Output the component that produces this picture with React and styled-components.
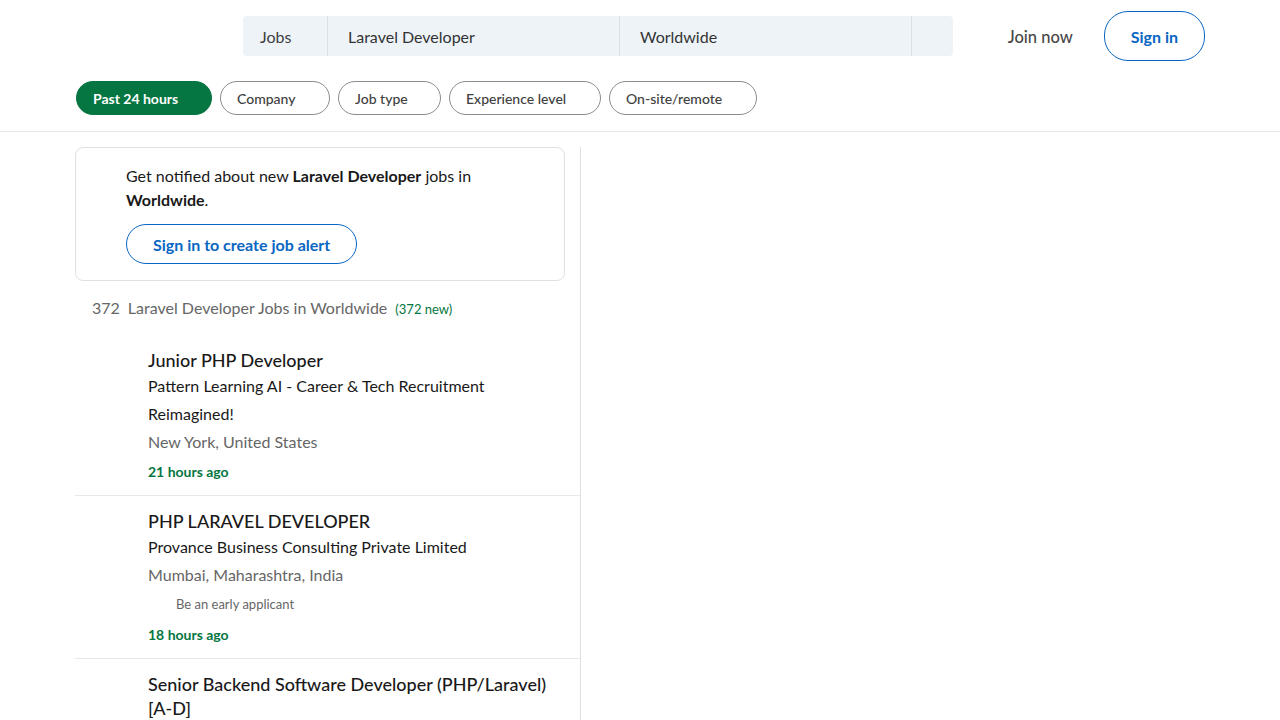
import styled, { createGlobalStyle } from "styled-components";

const GlobalStyle = createGlobalStyle`
  body {
    margin: 0;
    background: #fff;
    font-family: Lato, "Open Sans", sans-serif;
    color: rgba(0, 0, 0, 0.9);
  }
`;

const Header = styled.header`
  border-bottom: 1px solid #e8e8e8;
`;

const TopBar = styled.div`
  display: flex;
  align-items: center;
  height: 72px;
  padding: 0 75px 0 243px;
`;

const SearchBar = styled.div`
  display: flex;
  width: 710px;
  height: 40px;
  background: #eef3f8;
  border-radius: 4px;
`;

const SearchCell = styled.div`
  display: flex;
  align-items: center;
  width: ${(p) => p.$w}px;
  padding-left: ${(p) => p.$pad}px;
  box-sizing: border-box;
  border-right: ${(p) => (p.$last ? "none" : "1px solid #dce0e3")};
  font-size: 16px;
  color: ${(p) => (p.$label ? "#404040" : "#333")};
`;

const Actions = styled.div`
  display: flex;
  align-items: center;
  margin-left: auto;
  gap: 31px;
`;

const JoinLink = styled.a`
  font-size: 16.5px;
  line-height: 24px;
  padding-top: 2px;
  color: #474747;
  font-weight: 500;
`;

const OutlineButton = styled.button`
  font-family: inherit;
  background: #fff;
  border: 1px solid #0a66c2;
  color: #0a66c2;
  font-size: 16px;
  font-weight: 700;
  height: ${(p) => p.$h}px;
  padding: 0 ${(p) => p.$px}px;
  border-radius: 24px;
`;

const Filters = styled.div`
  display: flex;
  gap: 8px;
  padding: 9px 76px 16px;
`;

const Pill = styled.button`
  font-family: inherit;
  height: 34px;
  width: ${(p) => p.$w}px;
  box-sizing: border-box;
  padding: 0 16px;
  text-align: left;
  border-radius: 17px;
  font-size: 14px;
  font-weight: ${(p) => (p.$active ? 700 : 500)};
  background: ${(p) => (p.$active ? "#057642" : "#fff")};
  color: ${(p) => (p.$active ? "#fff" : "#404040")};
  border: 1px solid ${(p) => (p.$active ? "#057642" : "#8c8c8c")};
`;

const Main = styled.main`
  display: flex;
  padding: 15px 0 0 75px;
`;

const LeftColumn = styled.section`
  width: 505px;
  border-right: 1px solid #e0e0e0;
`;

const AlertCard = styled.div`
  width: 490px;
  box-sizing: border-box;
  border: 1px solid #e0e0e0;
  border-radius: 8px;
  padding: 16px 24px 16px 50px;
`;

const AlertText = styled.p`
  margin: 0 0 12px;
  font-size: 16px;
  line-height: 24px;
  color: #191919;
  b {
    font-weight: 700;
  }
`;

const ResultCount = styled.div`
  display: flex;
  align-items: baseline;
  gap: 8px;
  padding: 17px 0 0 17px;
  height: 37px;
  font-size: 16px;
  color: #666;
`;

const NewCount = styled.span`
  font-size: 13px;
  color: #057642;
`;

const JobList = styled.ul`
  list-style: none;
  margin: 0;
  padding: 0;
`;

const JobItem = styled.li`
  padding: 13px 24px 10px 73px;
  border-bottom: 1px solid #e8e8e8;
`;

const JobTitle = styled.h3`
  margin: 0;
  font-size: 18px;
  font-weight: 500;
  line-height: 24px;
  color: #191919;
`;

const Company = styled.h4`
  margin: 0;
  font-size: 16px;
  font-weight: 400;
  line-height: 28px;
  color: #191919;
`;

const Location = styled.div`
  font-size: 16px;
  line-height: 28px;
  color: #666;
`;

const Insight = styled.div`
  padding-left: 28px;
  font-size: 13px;
  line-height: 30px;
  color: #666;
`;

const Posted = styled.time`
  display: block;
  margin-top: 3px;
  font-size: 14px;
  font-weight: 700;
  line-height: 26px;
  color: #057642;
`;

const jobs = [
  {
    title: "Junior PHP Developer",
    company: "Pattern Learning AI - Career & Tech Recruitment Reimagined!",
    location: "New York, United States",
    posted: "21 hours ago",
  },
  {
    title: "PHP LARAVEL DEVELOPER",
    company: "Provance Business Consulting Private Limited",
    location: "Mumbai, Maharashtra, India",
    insight: "Be an early applicant",
    posted: "18 hours ago",
  },
  {
    title: "Senior Backend Software Developer (PHP/Laravel) [A-D]",
  },
];

const filters = [
  { label: "Past 24 hours", w: 136, active: true },
  { label: "Company", w: 110 },
  { label: "Job type", w: 103 },
  { label: "Experience level", w: 152 },
  { label: "On-site/remote", w: 148 },
];

export default function App() {
  return (
    <>
      <GlobalStyle />
      <Header>
        <TopBar>
          <SearchBar>
            <SearchCell $w={85} $pad={17} $label>
              Jobs
            </SearchCell>
            <SearchCell $w={292} $pad={20}>
              Laravel Developer
            </SearchCell>
            <SearchCell $w={292} $pad={20}>
              Worldwide
            </SearchCell>
            <SearchCell $w={41} $last />
          </SearchBar>
          <Actions>
            <JoinLink>Join now</JoinLink>
            <OutlineButton $h={50} $px={26}>
              Sign in
            </OutlineButton>
          </Actions>
        </TopBar>
        <Filters>
          {filters.map((f) => (
            <Pill key={f.label} $w={f.w} $active={f.active}>
              {f.label}
            </Pill>
          ))}
        </Filters>
      </Header>
      <Main>
        <LeftColumn>
          <AlertCard>
            <AlertText>
              Get notified about new <b>Laravel Developer</b> jobs in{" "}
              <b>Worldwide</b>.
            </AlertText>
            <OutlineButton $h={40} $px={26}>
              Sign in to create job alert
            </OutlineButton>
          </AlertCard>
          <ResultCount>
            <span>372</span>
            <span>Laravel Developer Jobs in Worldwide</span>
            <NewCount>(372 new)</NewCount>
          </ResultCount>
          <JobList>
            {jobs.map((job) => (
              <JobItem key={job.title}>
                <JobTitle>{job.title}</JobTitle>
                {job.company && <Company>{job.company}</Company>}
                {job.location && <Location>{job.location}</Location>}
                {job.insight && <Insight>{job.insight}</Insight>}
                {job.posted && <Posted>{job.posted}</Posted>}
              </JobItem>
            ))}
          </JobList>
        </LeftColumn>
      </Main>
    </>
  );
}
